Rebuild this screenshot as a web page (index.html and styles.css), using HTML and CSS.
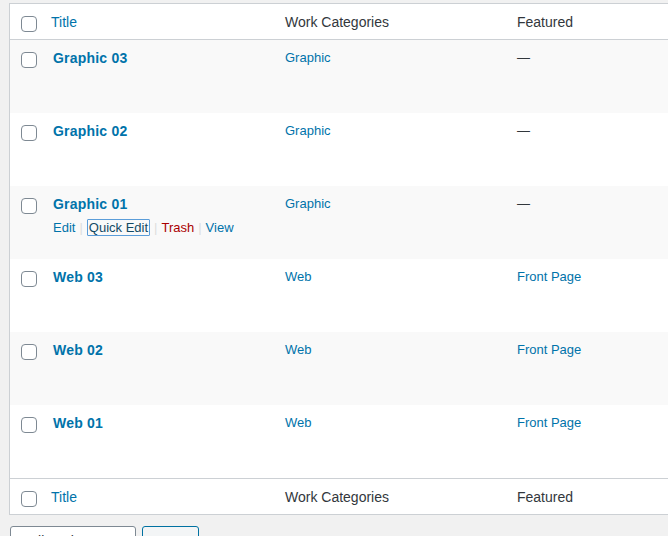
FILE: index.html
```
<!DOCTYPE html>
<html lang="en">
<head>
    <meta charset="UTF-8">
    <meta name="viewport" content="width=device-width, initial-scale=1.0">
    <title>Works</title>
    <link rel="stylesheet" href="styles.css">
</head>
<body>
    <div class="wrap">
        <table class="posts">
            <thead>
                <tr>
                    <th class="check-col"><input type="checkbox"></th>
                    <th class="title-col"><a href="#">Title</a></th>
                    <th class="cat-col">Work Categories</th>
                    <th class="feat-col">Featured</th>
                </tr>
            </thead>
            <tbody>
                <tr class="alt">
                    <td class="check-col"><input type="checkbox"></td>
                    <td class="title-col"><a class="row-title" href="#">Graphic 03</a></td>
                    <td class="cat-col"><a href="#">Graphic</a></td>
                    <td class="feat-col"><span class="dash">—</span></td>
                </tr>
                <tr>
                    <td class="check-col"><input type="checkbox"></td>
                    <td class="title-col"><a class="row-title" href="#">Graphic 02</a></td>
                    <td class="cat-col"><a href="#">Graphic</a></td>
                    <td class="feat-col"><span class="dash">—</span></td>
                </tr>
                <tr class="alt">
                    <td class="check-col"><input type="checkbox"></td>
                    <td class="title-col">
                        <a class="row-title" href="#">Graphic 01</a>
                        <div class="row-actions">
                            <a href="#">Edit</a><span class="sep">|</span><a class="focused" href="#">Quick Edit</a><span class="sep">|</span><a class="trash" href="#">Trash</a><span class="sep">|</span><a href="#">View</a>
                        </div>
                    </td>
                    <td class="cat-col"><a href="#">Graphic</a></td>
                    <td class="feat-col"><span class="dash">—</span></td>
                </tr>
                <tr>
                    <td class="check-col"><input type="checkbox"></td>
                    <td class="title-col"><a class="row-title" href="#">Web 03</a></td>
                    <td class="cat-col"><a href="#">Web</a></td>
                    <td class="feat-col"><a href="#">Front Page</a></td>
                </tr>
                <tr class="alt">
                    <td class="check-col"><input type="checkbox"></td>
                    <td class="title-col"><a class="row-title" href="#">Web 02</a></td>
                    <td class="cat-col"><a href="#">Web</a></td>
                    <td class="feat-col"><a href="#">Front Page</a></td>
                </tr>
                <tr>
                    <td class="check-col"><input type="checkbox"></td>
                    <td class="title-col"><a class="row-title" href="#">Web 01</a></td>
                    <td class="cat-col"><a href="#">Web</a></td>
                    <td class="feat-col"><a href="#">Front Page</a></td>
                </tr>
            </tbody>
            <tfoot>
                <tr>
                    <th class="check-col"><input type="checkbox"></th>
                    <th class="title-col"><a href="#">Title</a></th>
                    <th class="cat-col">Work Categories</th>
                    <th class="feat-col">Featured</th>
                </tr>
            </tfoot>
        </table>

        <div class="bulk">
            <div class="select">Bulk actions</div>
            <button class="apply">Apply</button>
        </div>
    </div>
</body>
</html>
```

FILE: styles.css
```
html, body {
    overflow: hidden;
}

body {
    margin: 0;
    background-color: #f1f1f1;
    font-family: "Liberation Sans", Arial, sans-serif;
    color: #32373c;
}

a {
    color: #0073aa;
    text-decoration: none;
}

.wrap {
    padding: 3px 0 0 9px;
}

.posts {
    width: 733px;
    border: 1px solid #ccd0d4;
    border-spacing: 0;
    background-color: #fff;
    table-layout: fixed;
}

.posts th,
.posts td {
    text-align: left;
    vertical-align: top;
    font-weight: normal;
}

.posts thead th,
.posts tfoot th {
    height: 35px;
    padding: 2px 8px 0;
    font-size: 14px;
    line-height: 33px;
    box-sizing: border-box;
}

.posts thead th {
    border-bottom: 1px solid #ccd0d4;
}

.posts tfoot th {
    border-top: 1px solid #ccd0d4;
}

.posts td {
    height: 73px;
    padding: 8px;
    font-size: 13px;
    line-height: 19px;
    box-sizing: border-box;
}

.posts tr.alt td {
    background-color: #f9f9f9;
}

.check-col {
    width: 33px;
}

.title-col {
    width: 234px;
}

.cat-col,
.feat-col {
    width: 232px;
}

.posts th.check-col,
.posts td.check-col {
    padding: 0 0 0 11px;
}

.posts th.check-col input,
.posts td.check-col input {
    margin-top: 12px;
}

input[type="checkbox"] {
    appearance: none;
    display: block;
    width: 16px;
    height: 16px;
    margin: 0;
    border: 1px solid #7e8993;
    border-radius: 4px;
    background-color: #fff;
    box-sizing: border-box;
}

.posts td.title-col {
    padding-left: 10px;
}

.row-title {
    font-size: 14px;
    font-weight: bold;
    line-height: 20px;
    letter-spacing: 0.2px;
}

.row-actions {
    padding-top: 4px;
    color: #ddd;
}

.row-actions .sep {
    margin: 0 4px;
}

.row-actions .focused {
    color: #124964;
    border: 1px solid #5b9dd9;
    border-radius: 1px;
    padding: 0 1px;
}

.row-actions .trash {
    color: #a00;
}

.dash {
    color: #32373c;
}

.bulk {
    display: flex;
    gap: 6px;
    margin-top: 11px;
    padding-left: 1px;
}

.select {
    width: 126px;
    height: 30px;
    padding: 0 10px;
    border: 1px solid #7e8993;
    border-radius: 3px;
    background-color: #fff;
    box-sizing: border-box;
    font-size: 14px;
    line-height: 28px;
    color: #32373c;
}

.apply {
    width: 57px;
    height: 30px;
    border: 1px solid #0071a1;
    border-radius: 3px;
    background-color: #f3f5f6;
    color: #0071a1;
    font-family: inherit;
    font-size: 13px;
}
```
